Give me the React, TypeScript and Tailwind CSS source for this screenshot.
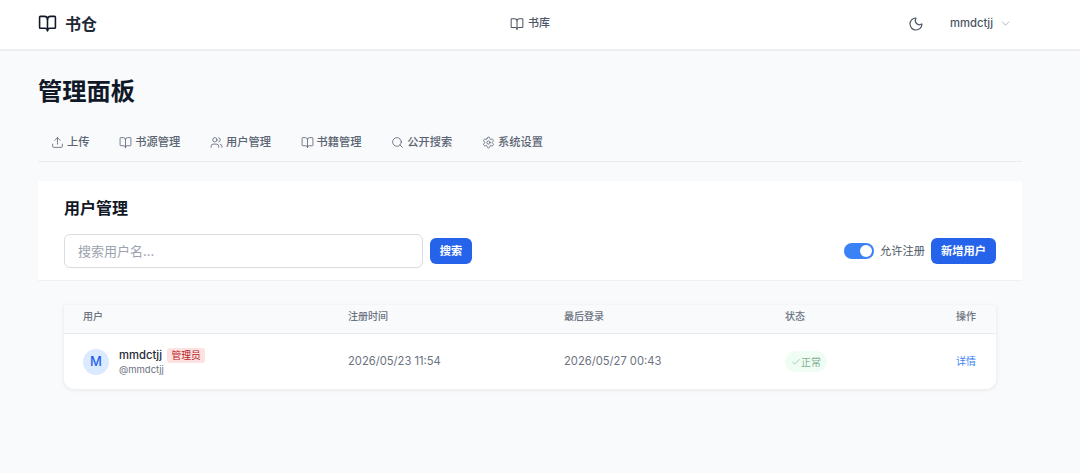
import { BookOpen, Upload, Users, Search, Settings, Moon, ChevronDown, Check } from "lucide-react";

const tabs = [
  { label: "上传", Icon: Upload },
  { label: "书源管理", Icon: BookOpen },
  { label: "用户管理", Icon: Users },
  { label: "书籍管理", Icon: BookOpen },
  { label: "公开搜索", Icon: Search },
  { label: "系统设置", Icon: Settings },
];

const row = "grid grid-cols-[265px_216px_221px_1fr_auto] items-center pl-[19px] pr-[20px]";

export default function App() {
  return (
    <div
      className="h-[473px] w-[1080px] overflow-hidden bg-[#f8fafc] text-[#111827]"
      style={{ fontFamily: 'Inter, "Noto Sans CJK SC", sans-serif' }}
    >
      <header className="flex h-[51px] items-center justify-between border-b-2 border-[#eceef1] bg-white pb-[2px] pl-[38px] pr-[68px]">
        <div className="flex w-[310px] items-center gap-[8px]">
          <BookOpen className="h-[19px] w-[19px] text-[#111827]" strokeWidth={2} />
          <span className="text-[16px] font-semibold leading-none text-[#1f2937]">书仓</span>
        </div>
        <div className="flex items-center gap-[4px] text-[#4b5563]">
          <BookOpen className="h-[14px] w-[14px]" strokeWidth={1.75} />
          <span className="text-[11px] font-medium">书库</span>
        </div>
        <div className="flex w-[300px] items-center justify-end text-[#4b5563]">
          <Moon className="mr-[26px] h-[16px] w-[16px]" strokeWidth={1.75} />
          <span className="text-[11.25px] font-medium">mmdctjj</span>
          <ChevronDown className="ml-[6px] h-[13px] w-[13px] text-[#9ca3af]" strokeWidth={1.5} />
        </div>
      </header>

      <main className="ml-[38px] w-[984px]">
        <h1 className="mt-[25px] text-[24.25px] font-bold leading-[32px] text-[#111827]">管理面板</h1>

        <nav className="mt-[19px] flex h-[35px] items-center gap-[29.7px] border-b border-[#e9ecef] pb-[3px] pl-[13px]">
          {tabs.map(({ label, Icon }) => (
            <div key={label} className="flex items-center gap-[3px] text-[#5b6472]">
              <Icon className="h-[13px] w-[13px]" strokeWidth={1.5} />
              <span className="text-[11.25px] font-medium leading-none">{label}</span>
            </div>
          ))}
        </nav>

        <section className="mt-[19px] h-[100px] border-b border-[#eef0f3] bg-white px-[26px] pt-[16px]">
          <h2 className="text-[16px] font-semibold leading-[22px] text-[#111827]">用户管理</h2>
          <div className="mt-[15px] flex items-center">
            <input
              readOnly
              placeholder="搜索用户名..."
              className="h-[34px] w-[359px] rounded-[6px] border border-[#d9dce1] bg-white px-[13px] text-[13px] placeholder:text-[#9ca3af]"
            />
            <button className="ml-[7px] h-[26px] w-[42px] rounded-[6px] bg-[#2563eb] text-[11.25px] font-semibold text-white">
              搜索
            </button>
            <div className="ml-auto flex items-center">
              <span className="flex h-[16px] w-[30px] items-center justify-end rounded-full bg-[#3b82f6] pr-[2px]">
                <span className="h-[12px] w-[12px] rounded-full bg-white" />
              </span>
              <span className="ml-[6px] text-[11.25px] text-[#4b5563]">允许注册</span>
              <button className="ml-[6px] h-[26px] w-[65px] rounded-[6px] bg-[#2563eb] text-[11.25px] font-semibold text-white">
                新增用户
              </button>
            </div>
          </div>
        </section>

        <div className="mx-[26px] mt-[24px] overflow-hidden rounded-b-[10px] bg-white shadow-[0_1px_4px_rgba(0,0,0,0.09)]">
          <div className={`${row} h-[29px] border-b border-[#e9ebee] bg-[#f8fafc] pb-[6px] text-[10px] font-medium text-[#6b7280]`}>
            <span>用户</span>
            <span>注册时间</span>
            <span>最后登录</span>
            <span>状态</span>
            <span className="text-right">操作</span>
          </div>
          <div className={`${row} h-[55px] bg-white`}>
            <div className="flex items-center">
              <span className="flex h-[26px] w-[26px] items-center justify-center rounded-full bg-[#dbeafe] text-[13px] font-medium text-[#2563eb]">
                M
              </span>
              <div className="ml-[10px]">
                <div className="flex items-center">
                  <span className="text-[11.25px] font-medium leading-[15px] text-[#1f2937]">mmdctjj</span>
                  <span className="ml-[5px] rounded-[3px] bg-[#fee2e2] px-[4.5px] text-[9.75px] leading-[15px] text-[#b91c1c]">
                    管理员
                  </span>
                </div>
                <div className="text-[9.5px] leading-[13px] text-[#6b7280]">@mmdctjj</div>
              </div>
            </div>
            <span className="text-[11.2px] text-[#6b7280]">2026/05/23 11:54</span>
            <span className="text-[11.2px] text-[#6b7280]">2026/05/27 00:43</span>
            <span className="flex">
              <span className="inline-flex h-[21px] items-center rounded-full bg-[#f0fdf4] px-[6px] text-[10px] leading-none text-[#7fb096]">
                <Check className="h-[10px] w-[10px]" strokeWidth={1.5} />
                正常
              </span>
            </span>
            <span className="text-right text-[10px] text-[#3b82f6]">详情</span>
          </div>
        </div>
      </main>
    </div>
  );
}
